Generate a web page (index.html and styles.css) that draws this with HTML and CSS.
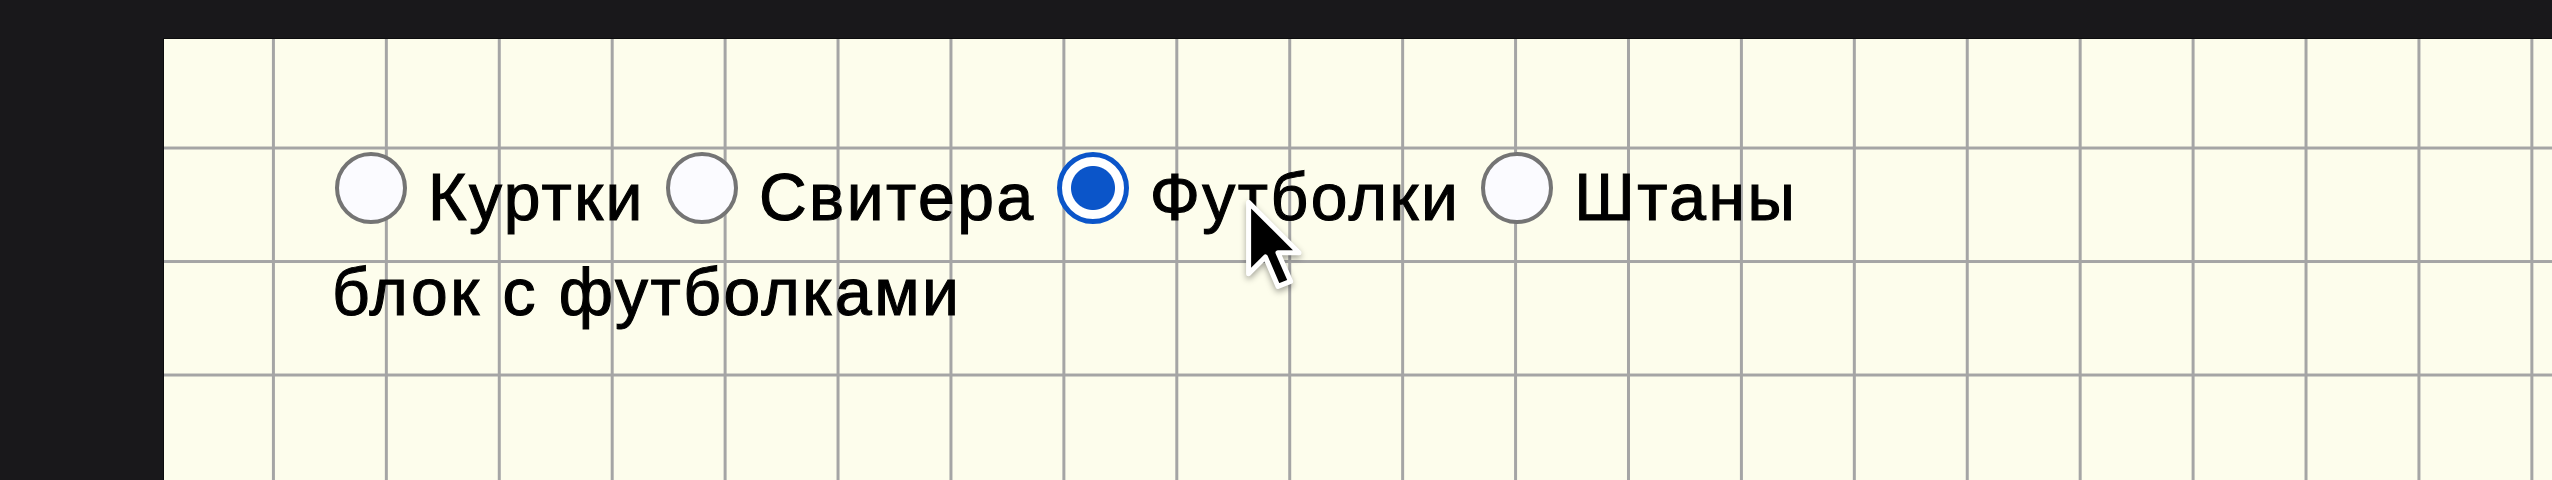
FILE: index.html
```html
<!DOCTYPE html>
<html lang="ru">
<head>
<meta charset="utf-8">
<title>Категории</title>
<link rel="stylesheet" href="styles.css">
</head>
<body>
<main class="sheet">
  <form class="choices">
    <label class="choice"><input type="radio" name="cat" class="radio"><span class="choice-text">Куртки</span></label>
    <label class="choice"><input type="radio" name="cat" class="radio"><span class="choice-text">Свитера</span></label>
    <label class="choice"><input type="radio" name="cat" class="radio" checked><span class="choice-text">Футболки</span></label>
    <label class="choice"><input type="radio" name="cat" class="radio"><span class="choice-text">Штаны</span></label>
  </form>
  <p class="caption">блок с футболками</p>
  <svg class="cursor" viewBox="-2 -2 18 25" width="76" height="105" aria-hidden="true">
    <path d="M0 0 V17 L4 13 L7 20 L10 18.8 L7 12 H12 Z" fill="#000" stroke="#fff" stroke-width="1.2" stroke-linejoin="round"/>
  </svg>
</main>
</body>
</html>
```
FILE: styles.css
```css
html, body {
  margin: 0;
  height: 100%;
}
body {
  background: #19181b;
  font-family: "Liberation Sans", Arial, sans-serif;
  color: #000;
  overflow: hidden;
}
.sheet {
  position: relative;
  box-sizing: border-box;
  margin: 38px 0 0 163px;
  height: 442px;
  padding: 114px 0 0 172px;
  border-top: 1px solid #0c0c0e;
  border-left: 1px solid #0c0c0e;
  background-color: #fdfdec;
  background-image:
    linear-gradient(to right, transparent 108px, #a5a5a5 108px, #a5a5a5 111px, transparent 111px),
    linear-gradient(to bottom, transparent 108px, #a5a5a5 108px, #a5a5a5 111px, transparent 111px);
  background-size: 112.93px 113.5px;
}
.choices {
  display: flex;
  align-items: flex-start;
  margin: -1px 0 0 -1px;
}
.choice {
  display: flex;
  align-items: flex-start;
}
.choice + .choice {
  margin-left: 21px;
}
.radio {
  appearance: none;
  -webkit-appearance: none;
  box-sizing: border-box;
  margin: 0;
  width: 72px;
  height: 72px;
  border-radius: 50%;
  border: 4px solid #747474;
  background: #fbfbff;
}
.radio:checked {
  border: 5px solid #0b55c9;
  background: radial-gradient(circle, #0b55c9 0 21.5px, #ffffff 22.5px);
}
.choice-text,
.caption {
  font-size: 66px;
  line-height: 76px;
  letter-spacing: 2.5px;
  -webkit-text-stroke: 1.1px #000;
}
.choice-text {
  margin: 7px 0 0 21px;
}
.caption {
  margin: 19px 0 0 -4px;
}
.cursor {
  position: absolute;
  left: 1076px;
  top: 155px;
  filter: drop-shadow(0 3px 3px rgba(0, 0, 0, 0.35));
}
```
